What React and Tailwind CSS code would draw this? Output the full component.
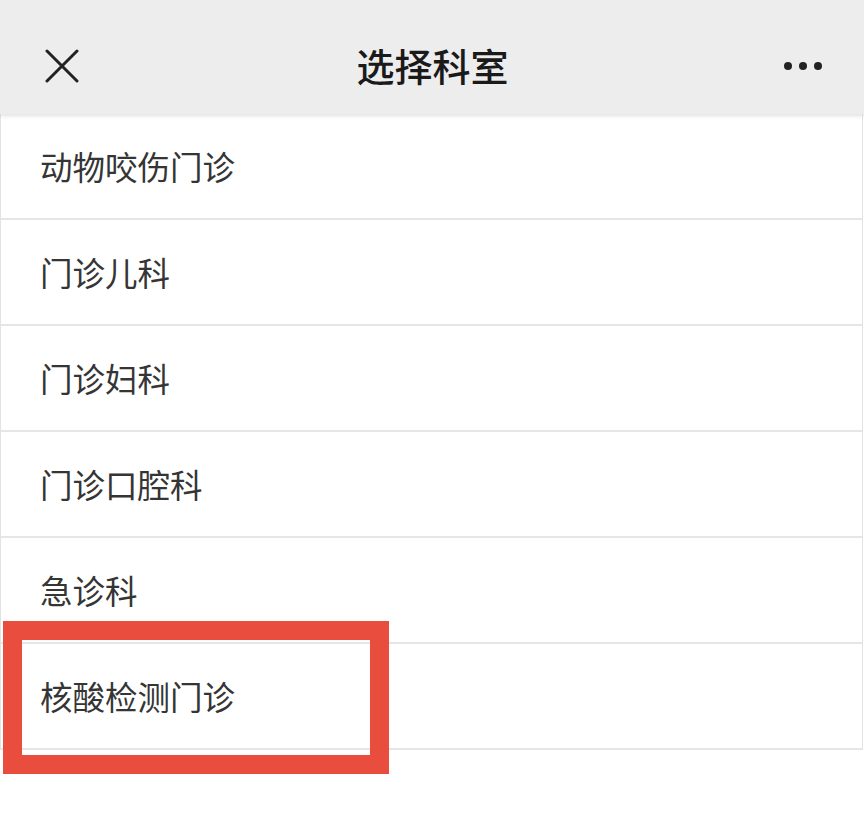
import React from 'react';

const departments = ['动物咬伤门诊', '门诊儿科', '门诊妇科', '门诊口腔科', '急诊科', '核酸检测门诊'];

const font = { fontFamily: '"Noto Sans CJK SC", "Noto Sans", sans-serif' };

export default function App() {
  return (
    <div className="relative w-[864px] h-[840px] bg-white overflow-hidden" style={font}>
      {/* header */}
      <div className="relative z-10 h-[114px] bg-[#ededed] flex items-center justify-between px-[45px] pt-[18px] shadow-[0_2px_4px_rgba(0,0,0,0.12)]">
        <svg width="34" height="34" viewBox="0 0 34 34">
          <path d="M2 2 L32 32 M32 2 L2 32" stroke="#222" strokeWidth="3" strokeLinecap="round" />
        </svg>
        <h1 className="absolute left-0 right-0 top-[46px] text-center text-[38px] font-medium text-[#1a1a1a] leading-none pointer-events-none pl-[1px]">
          选择科室
        </h1>
        <div className="flex items-center gap-[7px] mr-[-3px]">
          <span className="w-[8px] h-[8px] rounded-full bg-[#222]" />
          <span className="w-[8px] h-[8px] rounded-full bg-[#222]" />
          <span className="w-[8px] h-[8px] rounded-full bg-[#222]" />
        </div>
      </div>

      {/* list */}
      <ul className="w-[863px] border-x border-[#e3e3e3]">
        {departments.map((d) => (
          <li
            key={d}
            className="h-[106px] flex items-center pl-[39px] border-b-2 border-[#e6e6e6] text-[32.5px] text-[#353535] leading-none"
          >
            {d}
          </li>
        ))}
      </ul>

      {/* highlight box */}
      <div className="absolute left-[3px] top-[621px] w-[386px] h-[153px] border-[19px] border-[#e84d3d]" />
    </div>
  );
}
